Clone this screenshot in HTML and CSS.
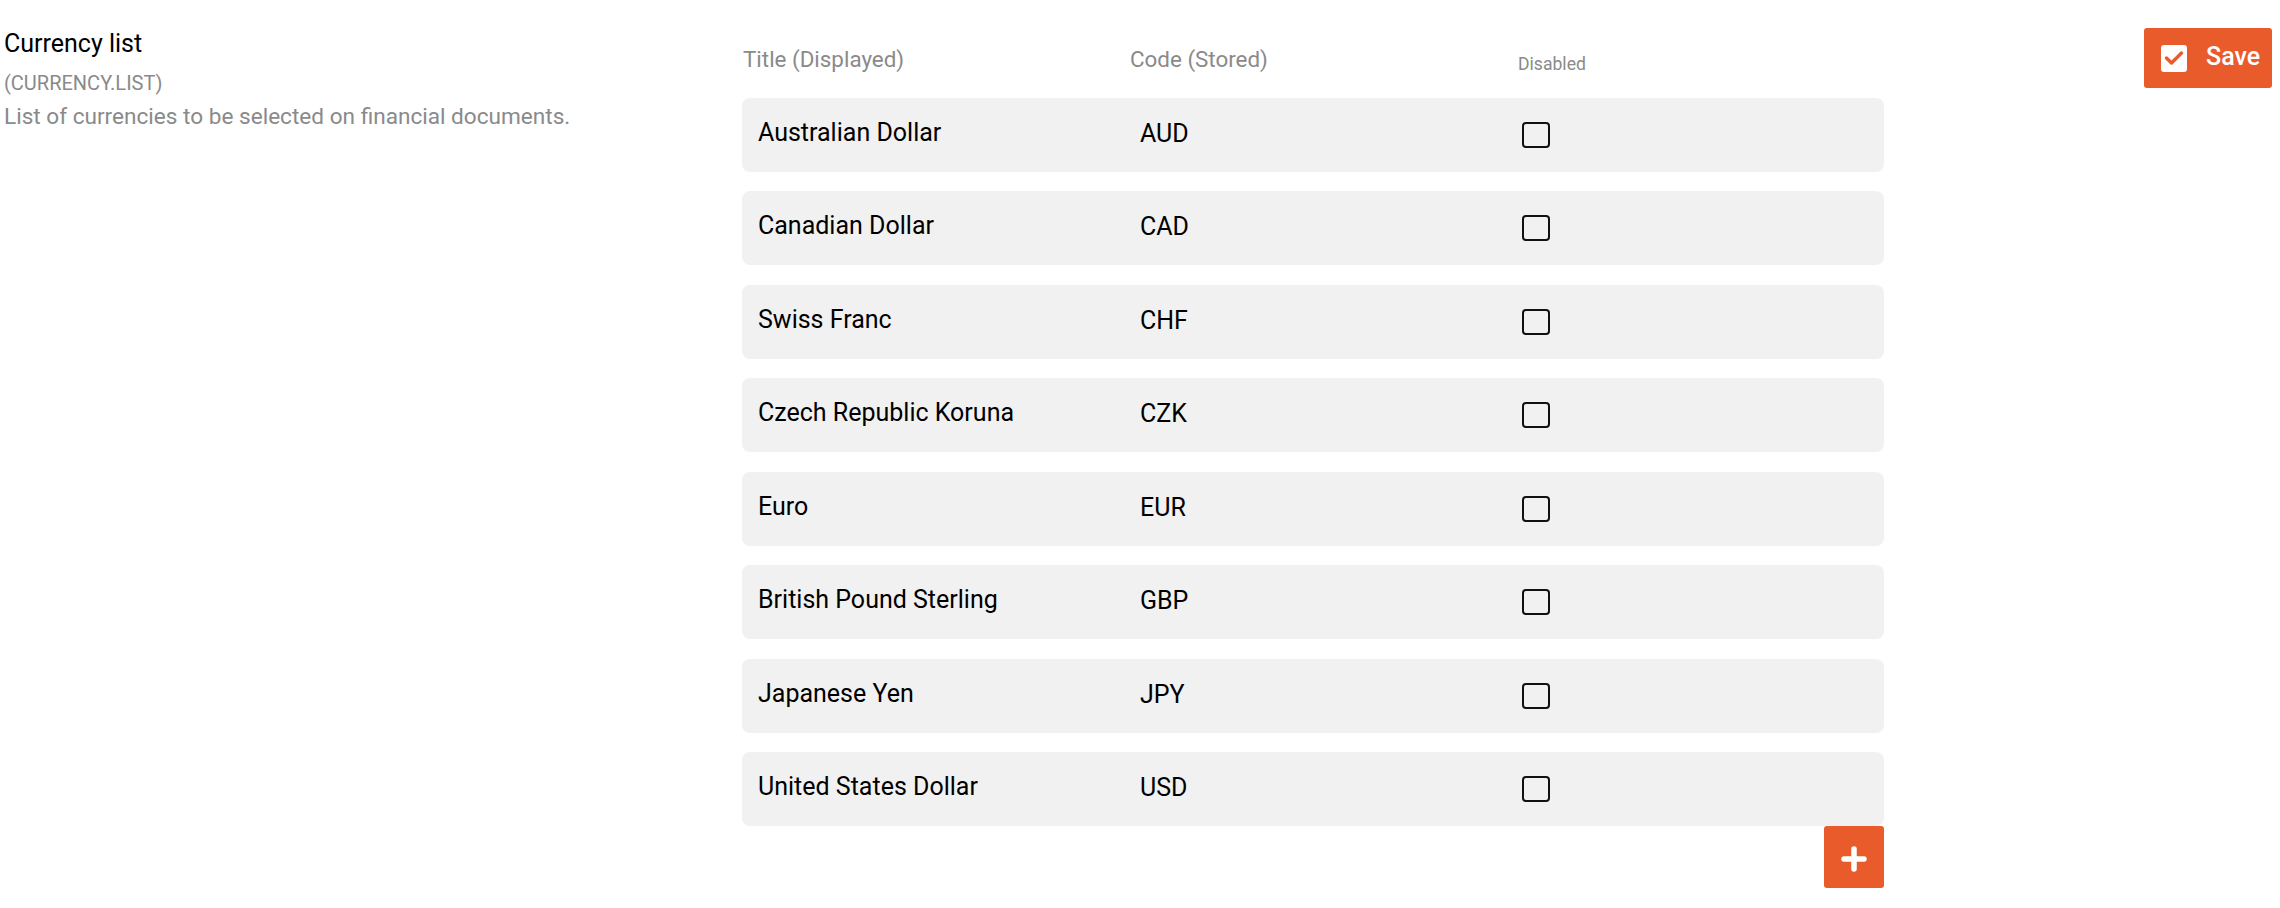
FILE: index.html
```html
<!DOCTYPE html>
<html lang="en">
<head>
<meta charset="utf-8">
<title>Currency list</title>
<link rel="stylesheet" href="styles.css">
</head>
<body>
<div class="page">
  <div class="info">
    <div class="info-title">Currency list</div>
    <div class="info-key">(CURRENCY.LIST)</div>
    <div class="info-desc">List of currencies to be selected on financial documents.</div>
  </div>
  <div class="table">
    <div class="head">
      <div class="h-title">Title (Displayed)</div>
      <div class="h-code">Code (Stored)</div>
      <div class="h-dis">Disabled</div>
    </div>
    <div class="rows">
      <div class="row"><div class="c-title">Australian Dollar</div><div class="c-code">AUD</div><div class="c-dis"><span class="box"></span></div></div>
      <div class="row"><div class="c-title">Canadian Dollar</div><div class="c-code">CAD</div><div class="c-dis"><span class="box"></span></div></div>
      <div class="row"><div class="c-title">Swiss Franc</div><div class="c-code">CHF</div><div class="c-dis"><span class="box"></span></div></div>
      <div class="row"><div class="c-title">Czech Republic Koruna</div><div class="c-code">CZK</div><div class="c-dis"><span class="box"></span></div></div>
      <div class="row"><div class="c-title">Euro</div><div class="c-code">EUR</div><div class="c-dis"><span class="box"></span></div></div>
      <div class="row"><div class="c-title">British Pound Sterling</div><div class="c-code">GBP</div><div class="c-dis"><span class="box"></span></div></div>
      <div class="row"><div class="c-title">Japanese Yen</div><div class="c-code">JPY</div><div class="c-dis"><span class="box"></span></div></div>
      <div class="row"><div class="c-title">United States Dollar</div><div class="c-code">USD</div><div class="c-dis"><span class="box"></span></div></div>
    </div>
    <button class="add" type="button" aria-label="Add">
      <svg width="26" height="26" viewBox="0 0 26 26"><path d="M13 3V23M3 13H23" stroke="#fff" stroke-width="5.5" stroke-linecap="round" fill="none"/></svg>
    </button>
  </div>
  <button class="save" type="button">
    <svg class="save-icon" width="26" height="27" viewBox="0 0 26 27"><rect x="0" y="0" width="26" height="27" rx="3" fill="#fff"/><path d="M5.5 13L10.5 18L20.5 8" stroke="#ea5b2b" stroke-width="3.4" stroke-linecap="round" stroke-linejoin="round" fill="none"/></svg>
    <span>Save</span>
  </button>
</div>
</body>
</html>
```

FILE: styles.css
```css
html, body {
  margin: 0;
  padding: 0;
  background: #ffffff;
}
body {
  font-family: Roboto, "Liberation Sans", sans-serif;
  color: #000;
}
.page {
  display: flex;
  align-items: flex-start;
  padding: 0 8px 0 4px;
}
.info {
  width: 738px;
  flex: none;
  padding-top: 29px;
}
.info-title {
  font-size: 25px;
  line-height: 29px;
  color: #000;
}
.info-key {
  margin-top: 13px;
  font-size: 20px;
  line-height: 24px;
  color: #8a8a8a;
}
.info-desc {
  margin-top: 9px;
  font-size: 22.6px;
  line-height: 26px;
  color: #8a8a8a;
}
.table {
  width: 1142px;
  flex: none;
  display: flex;
  flex-direction: column;
}
.head {
  display: flex;
  height: 98px;
  align-items: flex-start;
  color: #8a8a8a;
}
.h-title {
  width: 387px;
  padding-left: 1px;
  padding-top: 46px;
  font-size: 22.4px;
  line-height: 26px;
}
.h-code {
  width: 388px;
  padding-top: 46px;
  font-size: 22.4px;
  line-height: 26px;
}
.h-dis {
  padding-top: 53px;
  font-size: 17.6px;
  line-height: 22px;
}
.rows {
  display: flex;
  flex-direction: column;
  gap: 19.43px;
}
.row {
  height: 74px;
  display: flex;
  align-items: center;
  background: #f1f1f1;
  border-radius: 8px;
}
.c-title {
  width: 382px;
  padding-left: 16px;
  padding-bottom: 5px;
  font-size: 25px;
  line-height: 29px;
}
.c-code {
  width: 382px;
  padding-bottom: 3px;
  font-size: 25px;
  line-height: 29px;
}
.c-dis {
  display: flex;
  align-items: center;
}
.box {
  display: block;
  width: 24px;
  height: 22px;
  border: 2px solid #111;
  border-radius: 4px;
  box-sizing: content-box;
}
.add {
  align-self: flex-end;
  width: 60px;
  height: 62px;
  border: none;
  padding: 0;
  margin: 0;
  background: #ea5b2b;
  border-radius: 3px;
  display: flex;
  align-items: center;
  justify-content: center;
}
.add svg {
  display: block;
  margin-top: 4px;
}
.save {
  margin-left: auto;
  margin-top: 28px;
  height: 60px;
  width: 128px;
  box-sizing: border-box;
  border: none;
  border-radius: 3px;
  background: #ea5b2b;
  color: #fff;
  display: flex;
  align-items: center;
  padding: 0 0 0 17px;
  gap: 19px;
  font-family: Roboto, "Liberation Sans", sans-serif;
  font-size: 25px;
  font-weight: 500;
}
.save-icon {
  display: block;
  flex: none;
}
.save span {
  line-height: 28px;
  padding-bottom: 2px;
}
```
